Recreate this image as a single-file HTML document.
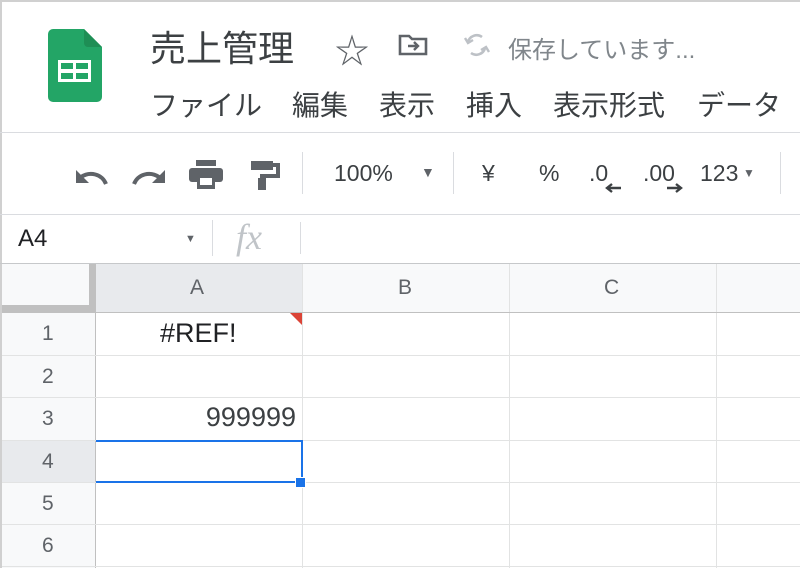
<!DOCTYPE html>
<html><head><meta charset="utf-8"><style>
*{margin:0;padding:0;box-sizing:border-box}
body{width:800px;height:568px;overflow:hidden;background:#fff;position:relative;font-family:"Liberation Sans","Noto Sans CJK JP",sans-serif;color:#3c4043}
.a{position:absolute}
.t{position:absolute;white-space:nowrap}
.hl{position:absolute;height:1px;background:#dadce0}
.vl{position:absolute;width:1px;background:#e2e3e3}
</style></head><body>
<div class="a" style="left:0;top:0;width:800px;height:2px;background:#d0d0d0"></div>
<div class="a" style="left:0;top:0;width:2px;height:568px;background:#d0d0d0"></div>
<svg class="a" style="left:48px;top:29px" width="55" height="74" viewBox="0 0 55 74">
<path d="M5 0H36L54 18V68a5 5 0 0 1-5 5H5a5 5 0 0 1-5-5V5a5 5 0 0 1 5-5z" fill="#23a566"/>
<path d="M36 0L54 18H40a4 4 0 0 1-4-4z" fill="#1e8e55"/>
<rect x="10" y="31" width="33" height="22" fill="#fff"/>
<rect x="13" y="34" width="12" height="6" fill="#23a566"/><rect x="28" y="34" width="12" height="6" fill="#23a566"/>
<rect x="13" y="44" width="12" height="6" fill="#23a566"/><rect x="28" y="44" width="12" height="6" fill="#23a566"/>
</svg>
<div class="t" style="left:150px;top:20px;font-size:36px;color:#3c4043">売上管理</div>
<div class="t" style="left:335px;top:24px;font-size:34px;color:#5f6368">☆</div>
<svg class="a" style="left:398px;top:33px" width="32" height="24" viewBox="0 0 32 24"><path d="M2 3h9l3 3h14v15H2z" fill="none" stroke="#5f6368" stroke-width="2.6"/><path d="M10 13h10M16 9l4 4-4 4" fill="none" stroke="#5f6368" stroke-width="2.4"/></svg>
<svg class="a" style="left:462px;top:32px" width="30" height="26" viewBox="0 0 30 26"><path d="M20 5a9 9 0 0 0-14 5M9 21a9 9 0 0 0 14-5" fill="none" stroke="#bdc1c6" stroke-width="2.6"/><path d="M3 6l3 5 5-3M27 20l-3-5-5 3" fill="none" stroke="#bdc1c6" stroke-width="2.4"/></svg>
<div class="t" style="left:508px;top:30px;font-size:24px;color:#80868b">保存しています...</div>
<div class="t" style="left:150px;top:84px;font-size:28px">ファイル</div>
<div class="t" style="left:292px;top:84px;font-size:28px">編集</div>
<div class="t" style="left:379px;top:84px;font-size:28px">表示</div>
<div class="t" style="left:466px;top:84px;font-size:28px">挿入</div>
<div class="t" style="left:553px;top:84px;font-size:28px">表示形式</div>
<div class="t" style="left:697px;top:84px;font-size:28px">データ</div>
<div class="hl" style="left:0;top:132px;width:800px"></div>
<svg class="a" style="left:72px;top:160px" width="40" height="30" viewBox="0 0 40 30"><path d="M34 24C30 14 18 11 9 17" fill="none" stroke="#5f6368" stroke-width="4"/><path d="M4 10v13h13z" fill="#5f6368"/></svg>
<svg class="a" style="left:130px;top:160px" width="40" height="30" viewBox="0 0 40 30"><path d="M4 24C8 14 20 11 29 17" fill="none" stroke="#5f6368" stroke-width="4"/><path d="M35 10v13H22z" fill="#5f6368"/></svg>
<svg class="a" style="left:188px;top:158px" width="38" height="34" viewBox="0 0 38 34"><rect x="8" y="2" width="20" height="6" fill="#5f6368"/><rect x="1" y="10" width="34" height="14" rx="3" fill="#5f6368"/><rect x="9" y="18" width="18" height="13" fill="#5f6368"/><rect x="12" y="20" width="12" height="7" fill="#fff"/></svg>
<svg class="a" style="left:248px;top:158px" width="34" height="34" viewBox="0 0 34 34"><rect x="3" y="3" width="22" height="9" fill="#5f6368"/><path d="M25 7h5v11H14v14" fill="none" stroke="#5f6368" stroke-width="4"/><rect x="10" y="20" width="8" height="12" fill="#5f6368"/></svg>
<div class="vl" style="left:302px;top:152px;height:42px;background:#dadce0"></div>
<div class="t" style="left:334px;top:160px;font-size:23px">100%</div>
<div class="t" style="left:421px;top:164px;font-size:14px;color:#5f6368">▼</div>
<div class="vl" style="left:453px;top:152px;height:42px;background:#dadce0"></div>
<div class="t" style="left:482px;top:160px;font-size:23px">¥</div>
<div class="t" style="left:539px;top:160px;font-size:23px">%</div>
<div class="t" style="left:589px;top:160px;font-size:23px">.0</div>
<svg class="a" style="left:604px;top:183px" width="18" height="10"><path d="M17 5H4M8 1L3 5l5 4" fill="none" stroke="#3c4043" stroke-width="2.4"/></svg>
<div class="t" style="left:643px;top:160px;font-size:23px">.00</div>
<svg class="a" style="left:666px;top:183px" width="18" height="10"><path d="M1 5h13M10 1l5 4-5 4" fill="none" stroke="#3c4043" stroke-width="2.4"/></svg>
<div class="t" style="left:700px;top:160px;font-size:23px">123</div>
<div class="t" style="left:743px;top:166px;font-size:12px;color:#5f6368">▼</div>
<div class="vl" style="left:780px;top:152px;height:42px;background:#dadce0"></div>
<div class="hl" style="left:0;top:214px;width:800px"></div>
<div class="t" style="left:18px;top:225px;font-size:24px;color:#202124">A4</div>
<div class="t" style="left:185px;top:233px;font-size:11px;color:#5f6368">▼</div>
<div class="vl" style="left:212px;top:220px;height:36px;background:#dadce0"></div>
<div class="t" style="left:236px;top:216px;font-size:36px;font-style:italic;font-family:'Liberation Serif',serif;color:#c0c4c8">fx</div>
<div class="vl" style="left:300px;top:222px;height:32px;background:#dadce0"></div>
<div class="hl" style="left:0;top:263px;width:800px;background:#c6c8ca"></div>
<div class="a" style="left:2px;top:264px;width:87px;height:41px;background:#f8f9fa"></div>
<div class="a" style="left:89px;top:264px;width:7px;height:48px;background:#c0c0c0"></div>
<div class="a" style="left:2px;top:305px;width:94px;height:7px;background:#c0c0c0"></div>
<div class="a" style="left:96px;top:264px;width:206px;height:48px;background:#e8eaed"></div>
<div class="a" style="left:303px;top:264px;width:497px;height:48px;background:#f8f9fa"></div>
<div class="t" style="left:190px;top:276px;font-size:21px;color:#5f6368">A</div>
<div class="t" style="left:398px;top:276px;font-size:21px;color:#5f6368">B</div>
<div class="t" style="left:604px;top:276px;font-size:21px;color:#5f6368">C</div>
<div class="a" style="left:2px;top:312px;width:94px;height:256px;background:#f8f9fa"></div>
<div class="a" style="left:2px;top:440px;width:94px;height:42px;background:#e8eaed"></div>
<div class="vl" style="left:95px;top:312px;height:256px;background:#c0c0c0"></div>
<div class="vl" style="left:302px;top:264px;height:304px"></div>
<div class="vl" style="left:509px;top:264px;height:304px"></div>
<div class="vl" style="left:716px;top:264px;height:304px"></div>
<div class="hl" style="left:2px;top:312px;width:798px;background:#c0c0c0"></div>
<div class="hl" style="left:2px;top:355px;width:798px;background:#e2e3e3"></div>
<div class="hl" style="left:2px;top:397px;width:798px;background:#e2e3e3"></div>
<div class="hl" style="left:2px;top:440px;width:798px;background:#e2e3e3"></div>
<div class="hl" style="left:2px;top:482px;width:798px;background:#e2e3e3"></div>
<div class="hl" style="left:2px;top:524px;width:798px;background:#e2e3e3"></div>
<div class="hl" style="left:2px;top:566px;width:798px;background:#e2e3e3"></div>
<div class="t" style="left:42px;top:322px;font-size:21px;color:#5f6368">1</div>
<div class="t" style="left:42px;top:365px;font-size:21px;color:#5f6368">2</div>
<div class="t" style="left:42px;top:407px;font-size:21px;color:#5f6368">3</div>
<div class="t" style="left:42px;top:450px;font-size:21px;color:#5f6368">4</div>
<div class="t" style="left:42px;top:492px;font-size:21px;color:#5f6368">5</div>
<div class="t" style="left:42px;top:534px;font-size:21px;color:#5f6368">6</div>
<div class="t" style="left:160px;top:318px;font-size:27px;color:#202124">#REF!</div>
<svg class="a" style="left:290px;top:313px" width="12" height="12"><path d="M0 0H12V12z" fill="#db4437"/></svg>
<div class="t" style="left:96px;width:200px;text-align:right;top:402px;font-size:27px;color:#3c4043">999999</div>
<div class="a" style="left:96px;top:440px;width:207px;height:43px;border:2px solid #1a73e8;border-left:none"></div>
<div class="a" style="left:295px;top:477px;width:11px;height:11px;background:#1a73e8;border:1px solid #fff"></div>
</body></html>
